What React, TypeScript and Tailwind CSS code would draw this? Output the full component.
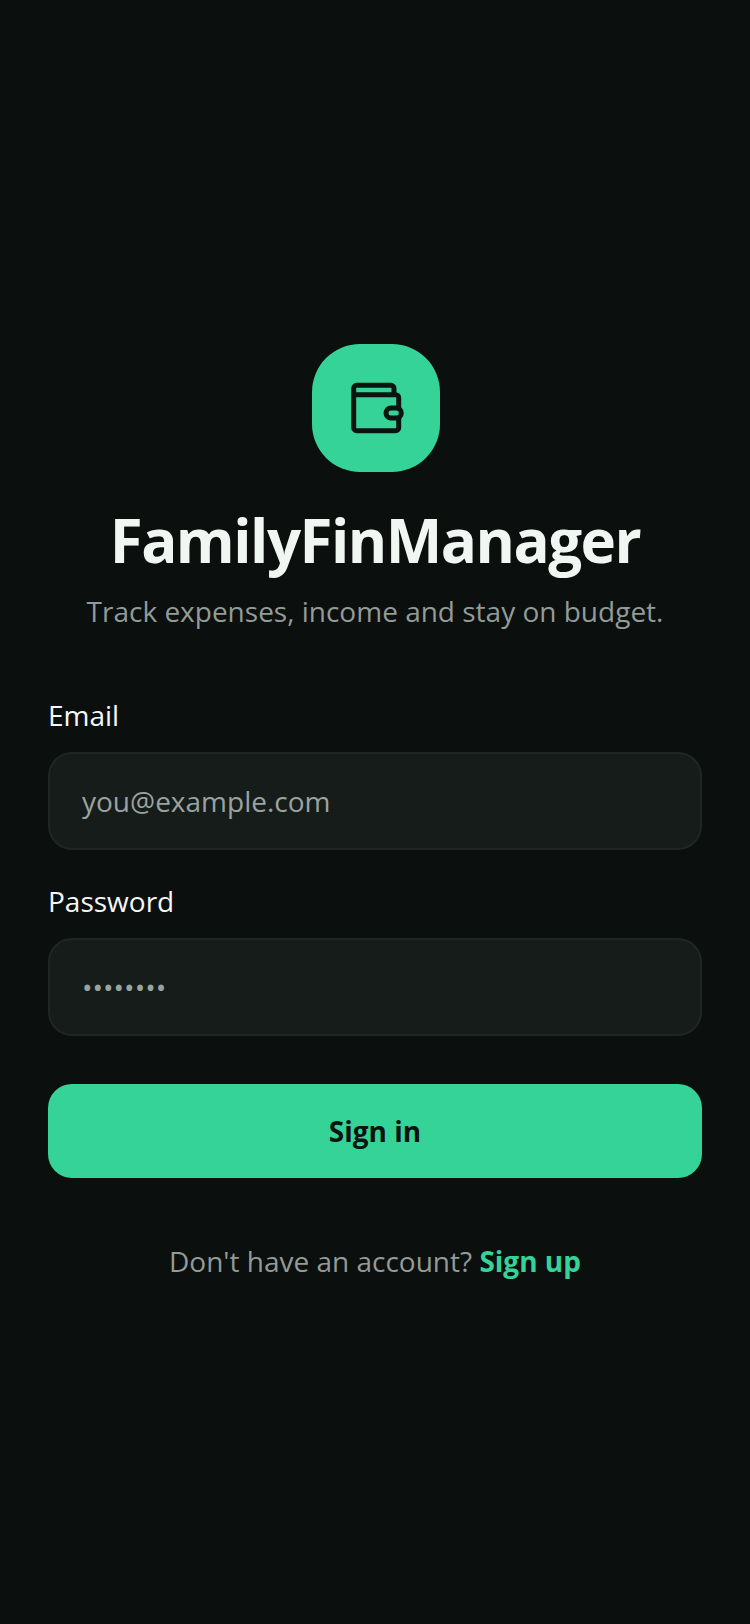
const font = "[font-family:'Open_Sans',sans-serif]";

function WalletIcon() {
  return (
    <svg width="56" height="56" viewBox="0 0 56 56" fill="none" stroke="#0b1411" strokeWidth="5" strokeLinecap="round" strokeLinejoin="round">
      <path d="M46 14.7V8.3a3 3 0 0 0-3-3H8.7a3 3 0 0 0-3 3v39.4a3 3 0 0 0 3 3h39a3 3 0 0 0 3-3V17.7a3 3 0 0 0-3-3H5.7" />
      <rect x="38" y="28" width="15.3" height="10" rx="5" fill="#36d399" />
    </svg>
  );
}

function Field({ label, type, placeholder }: { label: string; type: string; placeholder: string }) {
  return (
    <div className="flex flex-col gap-[18px]">
      <label className="text-[28px] leading-[38px] text-[#f4f7f5]">{label}</label>
      <input
        type={type}
        placeholder={placeholder}
        className={`h-[98px] w-full rounded-3xl border-2 border-[#1f2624] bg-[#161c1a] px-8 text-[28px] text-[#f4f7f5] outline-none placeholder:text-[#9aa39f] ${font}`}
      />
    </div>
  );
}

export default function App() {
  return (
    <div className={`flex h-[1624px] w-[750px] flex-col justify-center bg-[#0b0f0e] px-12 pb-px ${font}`}>
      <div className="flex flex-col items-center">
        <div className="ml-0.5 flex h-32 w-32 items-center justify-center rounded-[48px] bg-[#36d399]">
          <WalletIcon />
        </div>
        <h1 className="mt-7 text-[60px] leading-[80px] font-bold tracking-[-1.5px] text-[#f0f7f3]">FamilyFinManager</h1>
        <p className="mt-3 text-[28px] leading-[38px] text-[#929b97]">Track expenses, income and stay on budget.</p>
      </div>

      <form className="mt-[66px] flex flex-col gap-8">
        <Field label="Email" type="email" placeholder="you@example.com" />
        <Field label="Password" type="password" placeholder="••••••••" />
        <button type="button" className="mt-4 h-[94px] w-full rounded-3xl bg-[#36d399] text-[28px] font-bold text-[#0b1411]">
          Sign in
        </button>
      </form>

      <p className="mt-16 text-center text-[28px] leading-[38px] text-[#929b97]">
        Don't have an account? <span className="font-bold text-[#36d399]">Sign up</span>
      </p>
    </div>
  );
}
